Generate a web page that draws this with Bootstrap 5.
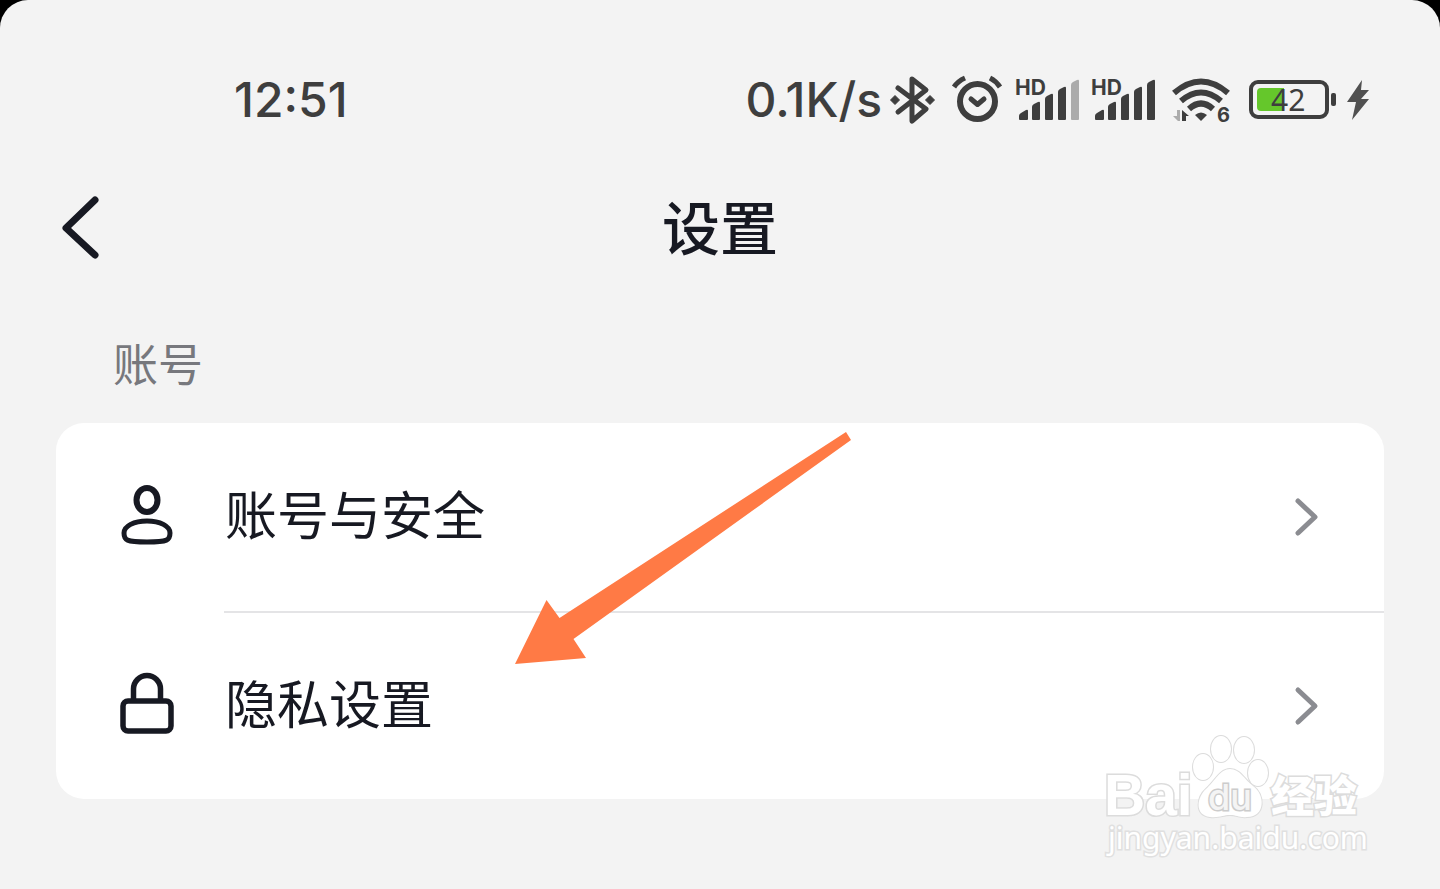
<!DOCTYPE html>
<html lang="zh-CN">
<head>
<meta charset="utf-8">
<meta name="viewport" content="width=device-width, initial-scale=1">
<title>设置</title>
<link href="https://cdn.jsdelivr.net/npm/bootstrap@5.3.0/dist/css/bootstrap.min.css" rel="stylesheet">
<style>
  :root { --ink: #171922; --status: #3e3e3e; --page: #f3f3f3; }
  body { background: #000; color: var(--ink); font-family: Inter, "Noto Sans CJK SC", sans-serif; }
  svg { display: block; flex: none; overflow: visible; }
  .screen { background: var(--page); border-radius: 28px 28px 0 0; padding: 72px 56px 0; }
  .status { color: var(--status); font-size: 48px; font-weight: 500; line-height: 56px; padding: 0 14px 0 178px; }
  .status-icons { gap: 16px; }
  .cell-icons { gap: 14px; }
  .rate { margin-right: 8px; }
  .titlebar { display: grid; grid-template-columns: 1fr auto 1fr; height: 96px; margin-top: 52px; }
  .titlebar h1 { font-size: 58px; line-height: 80px; font-weight: 500; padding-bottom: 6px; font-family: "Noto Sans CJK SC", sans-serif; }
  .section-title { font-size: 45px; line-height: 64px; font-weight: 400; color: #77787d; margin-top: 55px; padding-left: 57px; font-family: "Noto Sans CJK SC", sans-serif; }
  .panel { border-radius: 28px; margin-top: 28px; }
  .entry { color: var(--ink); padding-left: 64px; gap: 50px; }
  .entry-body { height: 188px; padding-right: 66px; font-size: 52px; line-height: 72px; font-family: "Noto Sans CJK SC", sans-serif; }
  .entry-label { padding: 0 0 8px 1px; }
  .entry + .entry .entry-body { border-top: 2px solid #e4e4e6; }
  .pointer { position: absolute; left: 459px; top: 8px; pointer-events: none; }
  .brand { position: absolute; right: 14px; bottom: -66px; pointer-events: none; }
</style>
</head>
<body>
<main class="screen min-vh-100">
  <div class="status d-flex justify-content-between align-items-center">
    <span>12:51</span>
    <div class="status-icons d-flex align-items-center">
      <div class="d-flex align-items-center">
        <span class="rate">0.1K/s</span>
        <svg width="46" height="50" viewBox="0 0 46 50" aria-label="Bluetooth"><path d="M8 13L36 34L22 46V4L36 15L8 37" fill="none" stroke="currentColor" stroke-width="5" stroke-linejoin="round" stroke-linecap="round"/><path d="M5 20.500l4.500 4.500-4.500 4.500-4.500-4.500zM40 20.500l4.500 4.500-4.500 4.500-4.500-4.500z" fill="currentColor" stroke="currentColor" stroke-linejoin="round"/></svg>
      </div>
      <div class="cell-icons d-flex align-items-center">
        <svg width="50" height="50" viewBox="0 0 50 50" aria-label="闹钟" fill="none" stroke="currentColor"><circle cx="25.500" cy="26.500" r="17.500" stroke-width="6"/><path d="M19 24l6.500 5.500 6.500-5.500" stroke-width="5" stroke-linecap="round" stroke-linejoin="round"/><path d="M2 12Q6 6 13 3M38 3Q44 6 48 12" stroke-width="5"/></svg>
        <svg width="62" height="50" viewBox="0 0 62 50" aria-label="信号"><text x="-1" y="20" font-size="21" font-weight="700" fill="currentColor">HD</text><g fill="currentColor"><path id="bars" d="M3 44v-3q0-2 2-3l5-3q2-1 2 1v8q0 1-1 1H4q-1 0-1-1zM16 44V32q0-2 2-3l4-2q2-1 2 1v16q0 1-1 1h-6q-1 0-1-1zM29 44V24q0-2 2-3l4-2q2-1 2 1v24q0 1-1 1h-6q-1 0-1-1zM42 44V17q0-2 2-3l4-2q2-1 2 1v31q0 1-1 1h-6q-1 0-1-1z"/><path opacity=".4" d="M55 44V10q0-2 2-3l4-2q2-1 2 1v38q0 1-1 1h-6q-1 0-1-1z"/></g></svg>
        <svg width="62" height="50" viewBox="0 0 62 50" aria-label="信号"><text x="-1" y="20" font-size="21" font-weight="700" fill="currentColor">HD</text><g fill="currentColor"><use href="#bars"/><path d="M55 44V10q0-2 2-3l4-2q2-1 2 1v38q0 1-1 1h-6q-1 0-1-1z"/></g></svg>
      </div>
      <svg width="62" height="54" viewBox="-2 -2 62 54" aria-label="无线网络"><g fill="none" stroke="currentColor" stroke-width="6"><path d="M2 18Q29-5 56 18M9 26Q29 9 49 26M17 34Q29 23 41 34"/></g><path d="M23 40q6-5 12 0l-6 6z" fill="currentColor"/><path d="M8 35v11H6L1 41h4v-6z" fill="currentColor" opacity=".4"/><path d="M10 46V35l7 6h-3v5z" fill="currentColor"/><text x="45" y="47" font-size="20" font-weight="700" fill="currentColor">6</text></svg>
      <div class="d-flex align-items-center gap-2">
        <svg width="90" height="50" viewBox="0 0 90 50" aria-label="电量 42%"><rect x="3" y="7" width="76" height="35" rx="7" fill="none" stroke="currentColor" stroke-width="4"/><path d="M13 13h23v23H13q-4 0-4-4V17q0-4 4-4z" fill="#65c72b"/><rect x="83" y="18" width="5" height="13" rx="2" fill="currentColor"/><text x="23" y="36" font-family="Noto Sans" font-size="30" font-weight="400" fill="currentColor">42</text></svg>
        <svg width="24" height="50" viewBox="0 0 24 50" aria-label="充电中"><path d="M16 5L1 27h9L6 45 23 24h-8l8-9h-8z" fill="#505050"/></svg>
      </div>
    </div>
  </div>

  <header class="titlebar align-items-center">
    <button type="button" class="btn border-0 p-0 ms-1 text-start" aria-label="返回"><svg width="40" height="68" viewBox="0 0 40 68"><path d="M35 6L6 34L35 61" fill="none" stroke="#171922" stroke-width="7" stroke-linecap="round" stroke-linejoin="round"/></svg></button>
    <h1 class="m-0">设置</h1>
  </header>

  <h2 class="section-title mb-0">账号</h2>
  <nav class="panel bg-white position-relative">
    <a href="#security" class="entry d-flex align-items-center text-decoration-none">
      <svg width="54" height="64" viewBox="0 0 54 64" fill="none" stroke="currentColor" stroke-width="6"><ellipse cx="27" cy="15" rx="10.500" ry="12"/><path d="M27 36C14 36 4 41 4 48C4 55 6 57 27 57S50 55 50 48C50 41 40 36 27 36Z" stroke-width="5"/></svg>
      <span class="entry-body flex-grow-1 d-flex align-items-center justify-content-between"><span class="entry-label">账号与安全</span>
        <svg width="24" height="40" viewBox="0 0 24 40"><path d="M4 4L21 20L4 36" fill="none" stroke="#8b8c91" stroke-width="5" stroke-linecap="round" stroke-linejoin="round"/></svg>
      </span>
    </a>
    <a href="#privacy" class="entry d-flex align-items-center text-decoration-none">
      <svg width="54" height="64" viewBox="0 0 54 64" fill="none" stroke="currentColor" stroke-width="5.500"><rect x="3" y="28" width="48" height="30" rx="5"/><path d="M13.500 28V16a13.500 13.500 0 0 1 27 0V28"/></svg>
      <span class="entry-body flex-grow-1 d-flex align-items-center justify-content-between"><span class="entry-label">隐私设置</span>
        <svg width="24" height="40" viewBox="0 0 24 40"><path d="M4 4L21 20L4 36" fill="none" stroke="#8b8c91" stroke-width="5" stroke-linecap="round" stroke-linejoin="round"/></svg>
      </span>
    </a>
    <svg class="pointer" width="338" height="234" viewBox="0 0 338 234"><path d="M0 233L31.500 169L44.500 187L331 1L336 9L58.500 208L71 227Z" fill="#ff7a45"/></svg>
    <svg class="brand" width="270" height="130" viewBox="0 0 270 130" fill="#fff" stroke="#dcdcdc" stroke-width="2" paint-order="stroke">
      <text x="4" y="80" font-family="Liberation Sans" font-weight="700" font-size="57" stroke-width="3">Bai</text>
      <g><ellipse cx="103" cy="32" rx="10" ry="13"/><ellipse cx="121" cy="14" rx="10" ry="13"/><ellipse cx="144" cy="15" rx="10" ry="13"/><ellipse cx="158" cy="38" rx="10" ry="13"/><path d="M130 34C140 34 144 44 153 51C165 59 166 82 147 82C139 83 137 80 130 80C123 80 120 83 110 82C94 80 97 62 106 54C115 46 120 34 130 34Z"/></g>
      <text x="108" y="75" font-family="Inter" font-weight="500" font-size="36" fill="#f4f4f4" stroke="#ccc" stroke-width="3">du</text>
      <text x="171" y="77" font-family="Noto Sans CJK SC" font-weight="900" font-size="43" stroke-width="3">经验</text>
      <text x="8" y="114" font-family="Noto Sans" font-size="30" stroke-width="3" stroke="#e0e0e0">jingyan.baidu.com</text>
    </svg>
  </nav>
</main>
<script src="https://cdn.jsdelivr.net/npm/bootstrap@5.3.0/dist/js/bootstrap.bundle.min.js"></script>
</body>
</html>
